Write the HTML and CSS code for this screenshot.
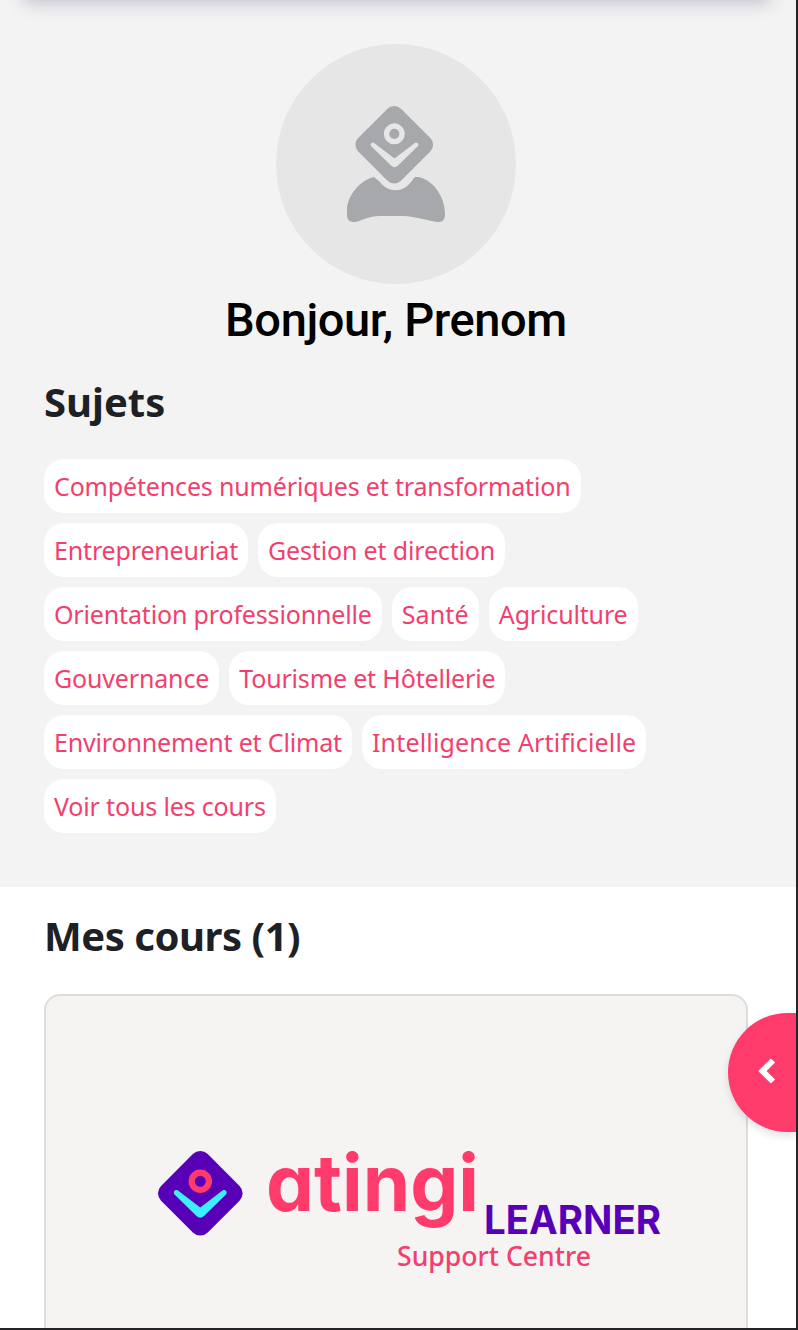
FILE: index.html
```
<!DOCTYPE html>
<html lang="fr">
<head>
  <meta charset="UTF-8" />
  <meta name="viewport" content="width=device-width, initial-scale=1.0" />
  <title>atingi | Tableau de bord</title>
  <link rel="stylesheet" href="styles.css">
</head>
<body>
  <div class="topbar-shadow"></div>

  <header class="profile">
    <svg class="avatar" viewBox="0 0 240 240">
      <circle cx="120" cy="120" r="120" fill="#e6e6e6"/>
      <path fill="#a7a8ab" d="M98 133 C84 136 71 152 71 166 V171 C71 176 74 178 78 178 C86 178 88 172 106 172 H126 C141 172 154 178 163 178 C167 178 169 175 169 170 C169 151 155 134 141 133 C137 133 138 135 135 138 C127 149 112 149 104 138 Z"/>
      <rect x="88" y="70.500" width="60.500" height="60.500" rx="9.500" transform="rotate(45 118.250 100.750)" fill="#a7a8ab"/>
      <circle cx="118.300" cy="89.800" r="7.800" fill="none" stroke="#e6e6e6" stroke-width="5.400"/>
      <path fill="#e6e6e6" d="M98.500 99.200 L118.500 114.500 L138.500 99.200 C141 97.800 143.500 100 141.800 102.300 L122 121.500 Q118.500 125 115 121.500 L95.200 102.300 C93.500 100 96 97.800 98.500 99.200 Z"/>
    </svg>
    <h1>Bonjour, Prenom</h1>

    <h2>Sujets</h2>
    <nav class="tags">
      <a>Compétences numériques et transformation</a>
      <a>Entrepreneuriat</a>
      <a>Gestion et direction</a>
      <a>Orientation professionnelle</a>
      <a class="wide">Santé</a>
      <a>Agriculture</a>
      <a>Gouvernance</a>
      <a>Tourisme et Hôtellerie</a>
      <a>Environnement et Climat</a>
      <a class="wide">Intelligence Artificielle</a>
      <a>Voir tous les cours</a>
    </nav>
  </header>

  <main class="courses">
    <h2>Mes cours (1)</h2>
    <div class="card">
      <svg class="logo" viewBox="0 -40 520 200">
        <rect x="18.300" y="21.300" width="66" height="66" rx="10.500" transform="rotate(45 51.300 54.300)" fill="#5800b8"/>
        <circle cx="51.300" cy="42.300" r="8.600" fill="none" stroke="#ff3b6b" stroke-width="6.200"/>
        <path fill="#3cf0ff" d="M29 51.500 L51.300 68.500 L73.500 51.500 C76.500 50 79 53 77 55.500 L55 77 Q51.300 80.500 47.500 77 L25.500 55.500 C23.500 53 26 50 29 51.500 Z"/>
        <text class="wordmark" x="117" y="72" textLength="213" lengthAdjust="spacingAndGlyphs">atingi</text>
        <text class="learner" x="335" y="94.500" textLength="177" lengthAdjust="spacingAndGlyphs">LEARNER</text>
        <text class="centre" x="248" y="127" textLength="194" lengthAdjust="spacingAndGlyphs">Support Centre</text>
      </svg>
    </div>
  </main>

  <button class="drawer-btn">
    <svg viewBox="0 0 20 28" width="20" height="28">
      <path d="M16 3.500 L5.500 14 L16 24.500" fill="none" stroke="#fff" stroke-width="6"/>
    </svg>
  </button>
</body>
</html>
```

FILE: styles.css
```
* {
  box-sizing: border-box;
}
html, body {
  margin: 0;
  padding: 0;
}
body {
  position: relative;
  height: 1330px;
  overflow: hidden;
  background: #fff;
  border-right: 2px solid #242427;
  border-bottom: 2px solid #242427;
  color: #1d2125;
  font-family: 'Noto Sans', sans-serif;
}
h1, h2 {
  margin: 0;
}
.topbar-shadow {
  position: absolute;
  top: -40px;
  left: 24px;
  right: 26px;
  height: 40px;
  box-shadow: 0 2px 18px rgba(40, 20, 80, 0.25);
}
.profile {
  height: 887px;
  padding: 44px 48px 0 44px;
  background: #f3f3f3;
}
.avatar {
  display: block;
  width: 240px;
  height: 240px;
  margin: 0 auto;
}
h1 {
  height: 72px;
  color: #000;
  font: 500 47px/72px Roboto, sans-serif;
  letter-spacing: -0.4px;
  text-align: center;
}
h2 {
  font-size: 40px;
  font-weight: 700;
  line-height: 50px;
}
.profile h2 {
  margin-top: 21px;
}
.tags {
  display: flex;
  flex-wrap: wrap;
  gap: 10px;
  margin-top: 32px;
}
.tags a {
  height: 54px;
  padding: 0 10px;
  border-radius: 20px;
  background: #fff;
  color: #f23f6d;
  font-size: 25px;
  letter-spacing: -0.16px;
  line-height: 54px;
  white-space: nowrap;
}
.tags .wide {
  letter-spacing: 0.16px;
}
.courses {
  padding: 24px 48px 0 44px;
}
.courses h2 {
  letter-spacing: -0.45px;
}
.card {
  height: 400px;
  margin-top: 33px;
  padding: 103px 0 0 103px;
  border: 2px solid #dcdcdd;
  border-radius: 16px;
  background: #f5f4f3;
}
.logo {
  display: block;
  width: 520px;
  height: 200px;
}
.wordmark {
  fill: #ff3b6b;
  font: 700 78px Inter, sans-serif;
  font-feature-settings: 'cv11';
}
.learner {
  fill: #5800b8;
  font: 700 39px Inter, sans-serif;
}
.centre {
  fill: #f23f6d;
  font: 500 27px 'Noto Sans', sans-serif;
}
.drawer-btn {
  position: absolute;
  top: 1013px;
  right: 0;
  width: 68px;
  height: 119px;
  padding: 0 0 0 9px;
  border: 0;
  border-radius: 60px 0 0 60px;
  background: #ff3b6b;
  box-shadow: 0 4px 8px rgba(0, 0, 0, 0.12);
}
```
